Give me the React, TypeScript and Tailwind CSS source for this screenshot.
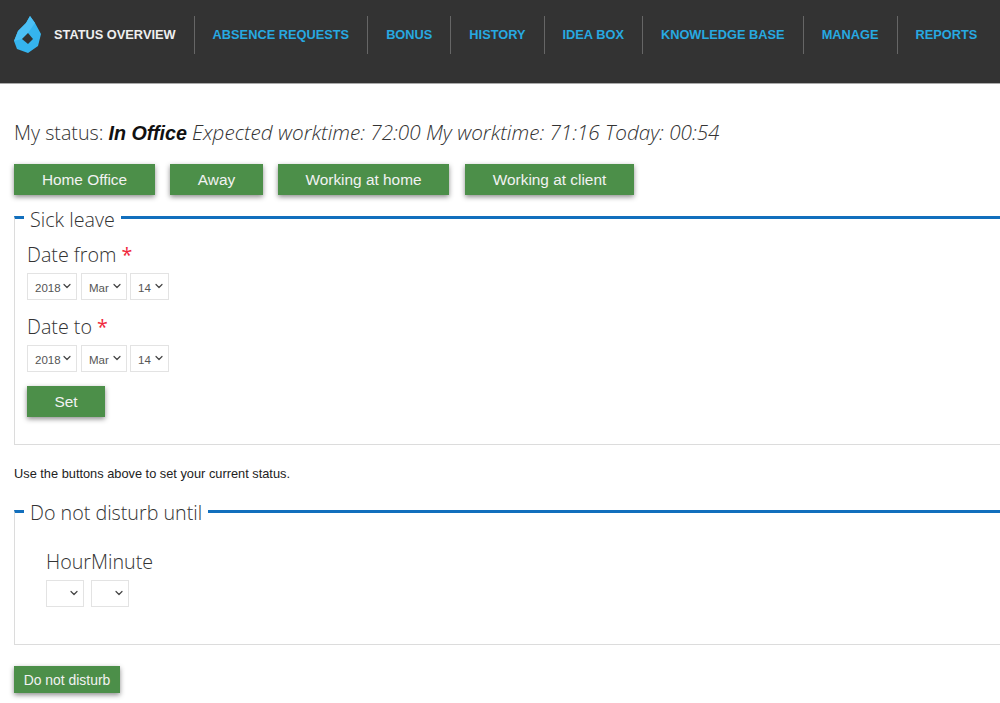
import { ChevronDown } from "lucide-react";

const open = "font-['Open_Sans',sans-serif] font-light";
const nav = [
  "ABSENCE REQUESTS",
  "BONUS",
  "HISTORY",
  "IDEA BOX",
  "KNOWLEDGE BASE",
  "MANAGE",
  "REPORTS",
];

function Logo() {
  return (
    <svg width="28" height="38" viewBox="0 0 28 38" className="shrink-0">
      <path d="M16 0 L21 7 L27 18 L24 30 L14 37 L3 33 L0 25 L4 15 L12 7 Z" fill="#35b4ee" />
      <path d="M4 15 L12 7 L16 0 L21 7 L14 17 L8 23 L0 25 Z" fill="#4cc0f5" />
      <path d="M14 17 L19 23 L14 28 L8 23 Z" fill="#333333" />
    </svg>
  );
}

function Btn({ label, className }: { label: string; className: string }) {
  return (
    <button className={`bg-[#4c8f49] text-[#f2f2f2] font-['Liberation_Sans',sans-serif] shadow-[0_2px_5px_rgba(0,0,0,0.45)] ${className}`}>
      {label}
    </button>
  );
}

function Sel({ value, className }: { value: string; className: string }) {
  return (
    <div className={`relative h-[27px] border border-[#e3e3e3] bg-white ${className}`}>
      <select
        defaultValue={value}
        className="appearance-none w-full h-[23px] bg-transparent pl-[7px] text-[11.5px] text-[#555] font-['Liberation_Sans',sans-serif] outline-none"
      >
        <option>{value}</option>
      </select>
      <ChevronDown size={12} strokeWidth={2.4} className="absolute right-[3px] top-[6px] text-[#444] pointer-events-none" />
    </div>
  );
}

function DateRow() {
  return (
    <div className="flex">
      <Sel value="2018" className="w-[50px] mr-[4px]" />
      <Sel value="Mar" className="w-[46px] mr-[3px]" />
      <Sel value="14" className="w-[39px]" />
    </div>
  );
}

function Label({ text }: { text: string }) {
  return (
    <div className={`${open} text-[19.7px] leading-[28px] text-[#333]`}>
      {text} <span className="text-[#f0283c] font-normal">*</span>
    </div>
  );
}

function Legend({ text, className }: { text: string; className: string }) {
  return (
    <legend className={`${open} px-[6px] text-[19.7px] leading-[28px] text-[#333] ${className}`}>{text}</legend>
  );
}

export default function App() {
  return (
    <div className="w-[1000px] h-[703px] overflow-hidden bg-white">
      <header className="h-[84px] bg-[#333333] border-b border-[#aaa] flex items-start pt-[16px] font-['Liberation_Sans',sans-serif] font-bold text-[12.8px] leading-[38px] whitespace-nowrap">
        <div className="h-[38px] flex items-center pl-[14px] pr-[18px] border-r border-[#666] gap-[12px] text-[#efefef]">
          <Logo />
          <span>STATUS OVERVIEW</span>
        </div>
        {nav.map((n, i) => (
          <a
            key={n}
            className={`h-[38px] px-[18px] text-[#27a9e1] ${i < nav.length - 1 ? "border-r border-[#666]" : ""}`}
          >
            {n}
          </a>
        ))}
      </header>

      <main className="pl-[14px]">
        <p className={`${open} mt-[35px] h-[28px] text-[19.7px] leading-[28px] text-[#333]`}>
          My status: <b className="font-['Liberation_Sans',sans-serif] font-bold italic text-[#111]">In Office</b>{" "}
          <i className="text-[20.7px] leading-none">Expected worktime: 72:00 My worktime: 71:16 Today: 00:54</i>
        </p>

        <div className="flex mt-[17px] text-[15.4px] leading-[29px]">
          <Btn label="Home Office" className="w-[141px] h-[31px] mr-[15px] pb-[1px]" />
          <Btn label="Away" className="w-[93px] h-[31px] mr-[15px] pb-[1px]" />
          <Btn label="Working at home" className="w-[171px] h-[31px] mr-[16px] pb-[1px]" />
          <Btn label="Working at client" className="w-[169px] h-[31px] pb-[1px]" />
        </div>

        <fieldset className="mt-[5px] h-[245px] border-t-[3px] border-t-[#126fbd] border-l border-l-[#dcdcdc] border-b border-b-[#dcdcdc] pl-[12px]">
          <Legend text="Sick leave" className="ml-[-3px] pt-[6px]" />
          <div className="mt-[7px]"><Label text="Date from" /></div>
          <div className="mt-[4px]"><DateRow /></div>
          <div className="mt-[13px]"><Label text="Date to" /></div>
          <div className="mt-[4px]"><DateRow /></div>
          <Btn label="Set" className="w-[78px] h-[31px] mt-[14px] text-[15.4px]" />
        </fieldset>

        <p className="mt-[21px] font-['Liberation_Sans',sans-serif] text-[12.8px] leading-[16px] text-[#222]">
          Use the buttons above to set your current status.
        </p>

        <fieldset className="mt-[13px] h-[150px] border-t-[3px] border-t-[#126fbd] border-l border-l-[#dcdcdc] border-b border-b-[#dcdcdc] pl-[31px]">
          <Legend text="Do not disturb until" className="ml-[-22px] pt-[4px]" />
          <div className={`${open} mt-[21px] text-[19.7px] leading-[28px] text-[#333]`}>HourMinute</div>
          <div className="flex mt-[4px] gap-[7px]">
            <Sel value="" className="w-[38px]" />
            <Sel value="" className="w-[38px]" />
          </div>
        </fieldset>

        <Btn label="Do not disturb" className="block mt-[21px] w-[106px] h-[27px] pt-[1px] text-[13.9px]" />
      </main>
    </div>
  );
}
